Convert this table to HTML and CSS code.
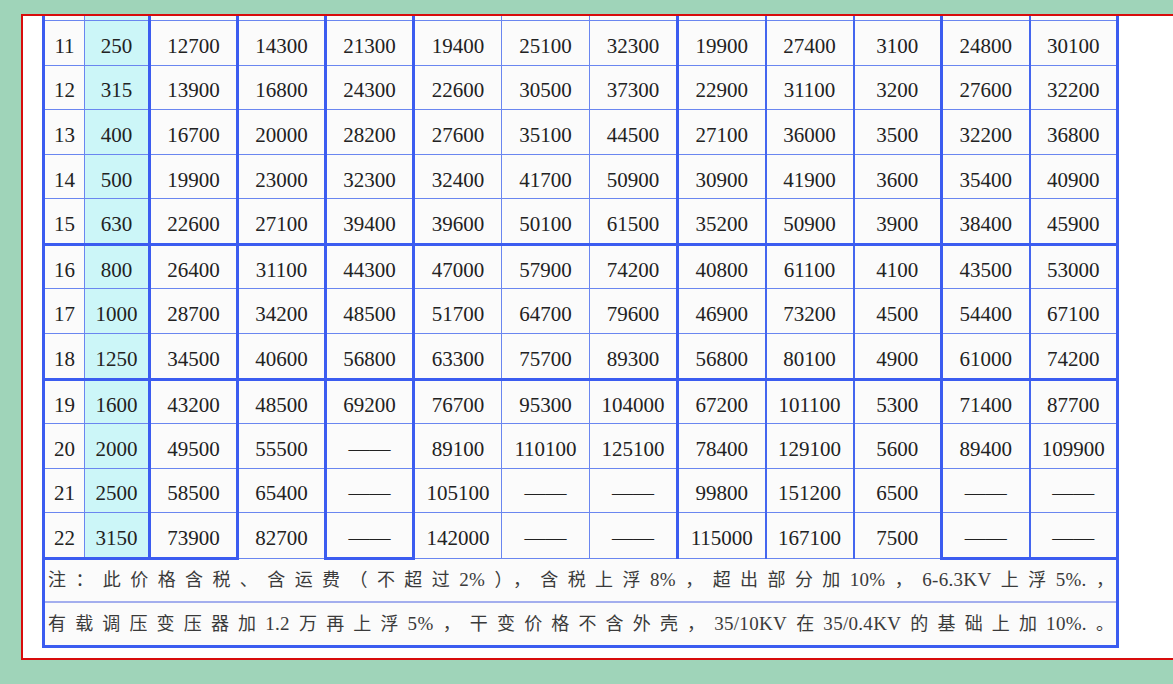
FILE: index.html
```html
<!DOCTYPE html>
<html lang="zh-CN">
<head>
<meta charset="utf-8">
<title>变压器价格表</title>
<link rel="stylesheet" href="styles.css">
</head>
<body>
<div class="frame">
  <table class="price">
    <colgroup>
      <col class="c-no">
      <col class="c-cap">
      <col class="c t3">
      <col class="c t3">
      <col class="c t3">
      <col class="c t1">
      <col class="c t1">
      <col class="c t3">
      <col class="c t2">
      <col class="c t2">
      <col class="c t3">
      <col class="c t2">
      <col class="c t-last">
    </colgroup>
    <tbody>
      <tr class="stub"><td></td><td class="cap"></td><td></td><td></td><td></td><td></td><td></td><td></td><td></td><td></td><td></td><td></td><td></td></tr>
      <tr><td>11</td><td class="cap">250</td><td>12700</td><td>14300</td><td>21300</td><td>19400</td><td>25100</td><td>32300</td><td>19900</td><td>27400</td><td>3100</td><td>24800</td><td>30100</td></tr>
      <tr><td>12</td><td class="cap">315</td><td>13900</td><td>16800</td><td>24300</td><td>22600</td><td>30500</td><td>37300</td><td>22900</td><td>31100</td><td>3200</td><td>27600</td><td>32200</td></tr>
      <tr><td>13</td><td class="cap">400</td><td>16700</td><td>20000</td><td>28200</td><td>27600</td><td>35100</td><td>44500</td><td>27100</td><td>36000</td><td>3500</td><td>32200</td><td>36800</td></tr>
      <tr><td>14</td><td class="cap">500</td><td>19900</td><td>23000</td><td>32300</td><td>32400</td><td>41700</td><td>50900</td><td>30900</td><td>41900</td><td>3600</td><td>35400</td><td>40900</td></tr>
      <tr><td>15</td><td class="cap">630</td><td>22600</td><td>27100</td><td>39400</td><td>39600</td><td>50100</td><td>61500</td><td>35200</td><td>50900</td><td>3900</td><td>38400</td><td>45900</td></tr>
      <tr class="thick-top"><td>16</td><td class="cap">800</td><td>26400</td><td>31100</td><td>44300</td><td>47000</td><td>57900</td><td>74200</td><td>40800</td><td>61100</td><td>4100</td><td>43500</td><td>53000</td></tr>
      <tr><td>17</td><td class="cap">1000</td><td>28700</td><td>34200</td><td>48500</td><td>51700</td><td>64700</td><td>79600</td><td>46900</td><td>73200</td><td>4500</td><td>54400</td><td>67100</td></tr>
      <tr><td>18</td><td class="cap">1250</td><td>34500</td><td>40600</td><td>56800</td><td>63300</td><td>75700</td><td>89300</td><td>56800</td><td>80100</td><td>4900</td><td>61000</td><td>74200</td></tr>
      <tr class="thick-top"><td>19</td><td class="cap">1600</td><td>43200</td><td>48500</td><td>69200</td><td>76700</td><td>95300</td><td>104000</td><td>67200</td><td>101100</td><td>5300</td><td>71400</td><td>87700</td></tr>
      <tr><td>20</td><td class="cap">2000</td><td>49500</td><td>55500</td><td>——</td><td>89100</td><td>110100</td><td>125100</td><td>78400</td><td>129100</td><td>5600</td><td>89400</td><td>109900</td></tr>
      <tr><td>21</td><td class="cap">2500</td><td>58500</td><td>65400</td><td>——</td><td>105100</td><td>——</td><td>——</td><td>99800</td><td>151200</td><td>6500</td><td>——</td><td>——</td></tr>
      <tr><td class="bb">22</td><td class="cap bb">3150</td><td class="bb">73900</td><td>82700</td><td class="bb">——</td><td>142000</td><td>——</td><td>——</td><td>115000</td><td>167100</td><td>7500</td><td class="bb">——</td><td class="bb">——</td></tr>
      <tr class="note n1"><td colspan="13">注：此价格含税、含运费（不超过<span class="lt">2%</span>），含税上浮<span class="lt">8%</span>，超出部分加<span class="lt">10%</span>，<span class="lt">6-6.3KV</span>上浮<span class="lt">5%.</span>，</td></tr>
      <tr class="note n2"><td colspan="13">有载调压变压器加<span class="lt">1.2</span>万再上浮<span class="lt">5%</span>，干变价格不含外壳，<span class="lt">35/10KV</span>在<span class="lt">35/0.4KV</span>的基础上加<span class="lt">10%.</span>。</td></tr>
    </tbody>
  </table>
</div>
</body>
</html>
```

FILE: styles.css
```css
html, body {
  margin: 0;
  padding: 0;
  background: #9fd4b9;
}

.frame {
  margin: 14px 0 0 21px;
  width: 1115px;
  height: 642px;
  border: 2px solid #d80c0c;
  background: #ffffff;
  padding: 0 18px 0 19px;
  box-sizing: content-box;
  overflow: hidden;
}

.price {
  border-collapse: collapse;
  table-layout: fixed;
  width: 1074px;
  font-family: "Liberation Serif", "Times New Roman", serif;
  font-size: 21px;
  color: #222;
  border-left: 3px solid #3b5cf0;
  border-right: 3px solid #3b5cf0;
  border-bottom: 3px solid #3b5cf0;
}

.c-no { width: 41px; border-left: 3px solid #3b5cf0; }
.c-cap { width: 65px; border-right: 3px solid #3b5cf0; }
.c { width: 88px; }
.t3 { border-right: 3px solid #3b5cf0; }
.t2 { border-right: 2px solid #4466ef; }
.t1 { border-right: 1px solid #6a86f0; }
.t-last { border-right: 3px solid #3b5cf0; }

.price td {
  border: 1px solid #6a86f0;
  background: #fbfbfb;
  text-align: center;
  vertical-align: middle;
  padding: 6px 0 0 0;
  height: 37.6px;
  line-height: 24px;
  white-space: nowrap;
}

.price td.cap {
  background: #ccf6f8;
}

.price tr.stub td {
  height: 4px;
  padding: 0;
  border-top: none;
  line-height: 0;
}

.price tr.thick-top td {
  border-top: 3px solid #3b5cf0;
  height: 36.4px;
}

.price td.bb {
  border-bottom: 3px solid #3b5cf0;
}

.price tr.note td {
  background: #fbfbfb;
  font-size: 18px;
  color: #3a3a3a;
  font-family: "Liberation Serif", "Noto Sans CJK SC", serif;
  text-align: justify;
  text-align-last: justify;
  padding: 0 2px 0 3px;
  line-height: 24px;
}

.price tr.n1 td {
  height: 41px;
  border-bottom: 2px solid #a3aeee;
}

.price tr.n2 td {
  height: 42.5px;
  border-bottom: 3px solid #3b5cf0;
}

.lt {
  font-size: 19px;
  letter-spacing: 0.3px;
}
```
